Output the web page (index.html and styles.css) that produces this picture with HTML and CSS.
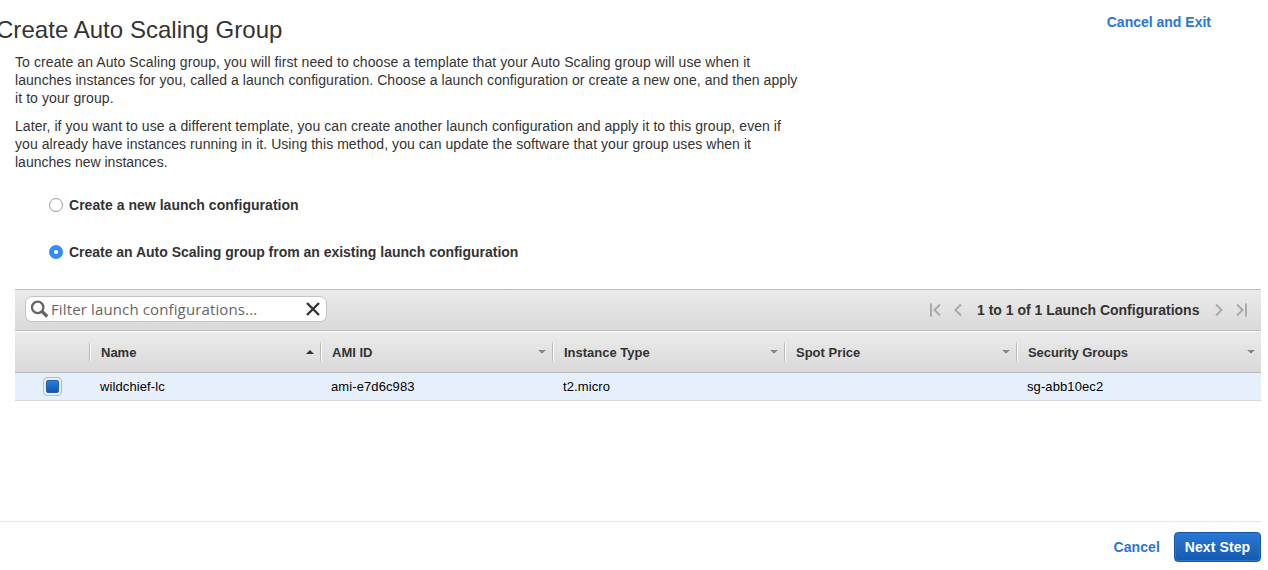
FILE: index.html
```html
<!DOCTYPE html>
<html lang="en">
<head>
<meta charset="utf-8">
<title>Create Auto Scaling Group</title>
<link rel="stylesheet" href="styles.css">
</head>
<body>
<div class="page">
  <header class="head">
    <h1 class="title">Create Auto Scaling Group</h1>
    <a class="link exit">Cancel and Exit</a>
  </header>
  <main class="main">
    <p class="intro"><span class="l1">To create an Auto Scaling group, you will first need to choose a template that your Auto Scaling group will use when it</span><br><span class="l2">launches instances for you, called a launch configuration. Choose a launch configuration or create a new one, and then apply</span><br><span class="l1">it to your group.</span></p>
    <p class="intro"><span class="l3">Later, if you want to use a different template, you can create another launch configuration and apply it to this group, even if</span><br><span class="l2">you already have instances running in it. Using this method, you can update the software that your group uses when it</span><br>launches new instances.</p>
    <div class="options">
      <label class="option"><span class="radio"></span><span class="wide">Create a new launch configuration</span></label>
      <label class="option"><span class="radio on"></span><span class="tight">Create an Auto Scaling group from an existing launch configuration</span></label>
    </div>
    <section class="panel">
      <div class="toolbar">
        <div class="search">
          <svg class="glass" width="19" height="19" viewBox="0 0 19 19"><circle cx="7.700" cy="7.400" r="5.700" fill="none" stroke="#666" stroke-width="2.300"/><path d="M12 11.500l5.300 5" stroke="#666" stroke-width="3.400"/></svg>
          <span class="placeholder">Filter launch configurations...</span>
          <svg class="clear" width="14" height="14" viewBox="0 0 14 14"><path d="M1 1l12 12M13 1L1 13" stroke="#333" stroke-width="2.400"/></svg>
        </div>
        <div class="pager">
          <svg width="12" height="14" viewBox="0 0 12 14"><path d="M2 .5v13M11 1.500L5.500 7l5.500 5.500" fill="none" stroke="#aaa" stroke-width="2"/></svg>
          <svg class="prev" width="8" height="14" viewBox="0 0 8 14"><path d="M7 1.500L1.500 7 7 12.500" fill="none" stroke="#aaa" stroke-width="2"/></svg>
          <span class="count">1 to 1 of 1 Launch Configurations</span>
          <svg class="next" width="8" height="14" viewBox="0 0 8 14"><path d="M1 1.500L6.500 7 1 12.500" fill="none" stroke="#aaa" stroke-width="2"/></svg>
          <svg width="12" height="14" viewBox="0 0 12 14"><path d="M10 .5v13M1 1.500L6.500 7 1 12.500" fill="none" stroke="#aaa" stroke-width="2"/></svg>
        </div>
      </div>
      <div class="row thead">
        <div></div>
        <div class="th"><span>Name</span><svg width="8" height="5" viewBox="0 0 8 5"><path d="M0 4L4 0l4 4z" fill="#333"/></svg></div>
        <div class="th"><span>AMI ID</span><svg width="8" height="5" viewBox="0 0 8 5"><path d="M0 1h8L4 5z" fill="#fff"/><path d="M0 0h8L4 4z" fill="#888"/></svg></div>
        <div class="th"><span>Instance Type</span><svg width="8" height="5" viewBox="0 0 8 5"><path d="M0 1h8L4 5z" fill="#fff"/><path d="M0 0h8L4 4z" fill="#888"/></svg></div>
        <div class="th"><span>Spot Price</span><svg width="8" height="5" viewBox="0 0 8 5"><path d="M0 1h8L4 5z" fill="#fff"/><path d="M0 0h8L4 4z" fill="#888"/></svg></div>
        <div class="th"><span class="tighter">Security Groups</span><svg width="8" height="5" viewBox="0 0 8 5"><path d="M0 1h8L4 5z" fill="#fff"/><path d="M0 0h8L4 4z" fill="#888"/></svg></div>
      </div>
      <div class="row item">
        <div class="pick"><span class="check"></span></div>
        <div>wildchief-lc</div>
        <div>ami-e7d6c983</div>
        <div>t2.micro</div>
        <div></div>
        <div>sg-abb10ec2</div>
      </div>
    </section>
  </main>
  <footer class="foot">
    <a class="link cancel">Cancel</a>
    <button class="button"><span>Next Step</span></button>
  </footer>
</div>
</body>
</html>
```
FILE: styles.css
```css
*, *::before { box-sizing: border-box; }
body { margin: 0; background: #fff; color: #333; font: 14px/18px "Liberation Sans", Arial, sans-serif; overflow: hidden; }
svg { display: block; flex: none; }
.page { height: 570px; width: 1261px; display: flex; flex-direction: column; }
.head { display: flex; justify-content: space-between; height: 53px; flex: none; }
.title { margin: 14px 0 0 -4px; font-size: 24px; line-height: 32px; font-weight: 400; letter-spacing: .04px; white-space: nowrap; }
.link { color: #2a75d5; font-weight: 700; white-space: nowrap; }
.exit { margin: 13px 50px 0 0; }
.main { padding-left: 15px; flex: 1; }
.intro { margin: 0 0 10px; white-space: nowrap; }
.l1 { letter-spacing: .084px; }
.l2 { letter-spacing: .058px; }
.l3 { letter-spacing: .071px; }
.wide { letter-spacing: .03px; }
.tight { letter-spacing: -.02px; }
.tighter { letter-spacing: -.08px; }
.options { padding: 15px 0 0 34px; display: flex; flex-direction: column; gap: 29px; font-weight: 700; }
.option { display: flex; align-items: center; gap: 6px; height: 18px; white-space: nowrap; }
.radio { width: 14px; height: 14px; border: 1px solid #999; border-radius: 50%; background: #fff; }
.radio.on { border: 0; background: radial-gradient(circle, #fff 0 1.8px, #318cfb 2.3px); }
.panel { margin-top: 28px; }
.toolbar { height: 42px; border-top: 1px solid #bbb; border-bottom: 1px solid #bbb; background: linear-gradient(#ebebeb, #d9d9d9); display: flex; align-items: center; justify-content: space-between; padding: 0 13px 0 10px; }
.search { width: 302px; height: 26px; margin-top: -2px; border: 1px solid #c4c4c4; border-radius: 7px; background: #fff; display: flex; align-items: center; padding: 0 6px 0 4px; }
.placeholder { margin-left: 2px; font: 15px/20px "Open Sans", sans-serif; letter-spacing: .13px; color: #666; flex: 1; white-space: nowrap; }
.pager { display: flex; align-items: center; }
.prev { margin-left: 13px; }
.count { width: 222px; margin: 0 16px 0 15px; font-weight: 700; white-space: nowrap; }
.next { margin-right: 13px; }
.row { display: grid; grid-template-columns: 74px 231px repeat(3, 232px) 245px; }
.thead { height: 42px; border-top: 1px solid #fff; border-bottom: 1px solid #bbb; background: linear-gradient(#ebebeb, #d9d9d9); align-items: center; font-size: 13px; font-weight: 700; }
.th { height: 18px; border-left: 1px solid #bbb; box-shadow: inset 1px 0 #fff; padding: 0 6px 0 11px; display: flex; align-items: center; justify-content: space-between; }
.th span { padding-top: 2px; }
.item { height: 28px; border-bottom: 1px solid #d3d7dc; background: #e6f0fd; color: #000; font-size: 13px; line-height: 27px; letter-spacing: .1px; }
.item > div { padding-left: 11px; }
.item .pick { padding: 4px 0 0 28px; }
.check { display: block; width: 19px; height: 19px; border: 1px solid #bbb; border-radius: 4px; background: #eee; padding: 2px; }
.check::before { content: ""; display: block; width: 13px; height: 13px; border-radius: 2px; border: 1px solid #1a62b8; background: linear-gradient(#2a7bdc, #1459ae); }
.foot { height: 49px; flex: none; border-top: 1px solid #e5e5e5; display: flex; justify-content: flex-end; align-items: flex-start; padding-top: 10px; }
.cancel { margin: 6px 14px 0 0; letter-spacing: .1px; }
.button { width: 87px; height: 30px; padding: 0; border: 1px solid #1457a9; border-radius: 4px; background: linear-gradient(#2b78d6, #1459b0); box-shadow: inset 0 0 0 1px #2d73c9; color: #fff; font: 700 14px/18px "Liberation Sans", Arial, sans-serif; letter-spacing: .1px; white-space: nowrap; }
```
